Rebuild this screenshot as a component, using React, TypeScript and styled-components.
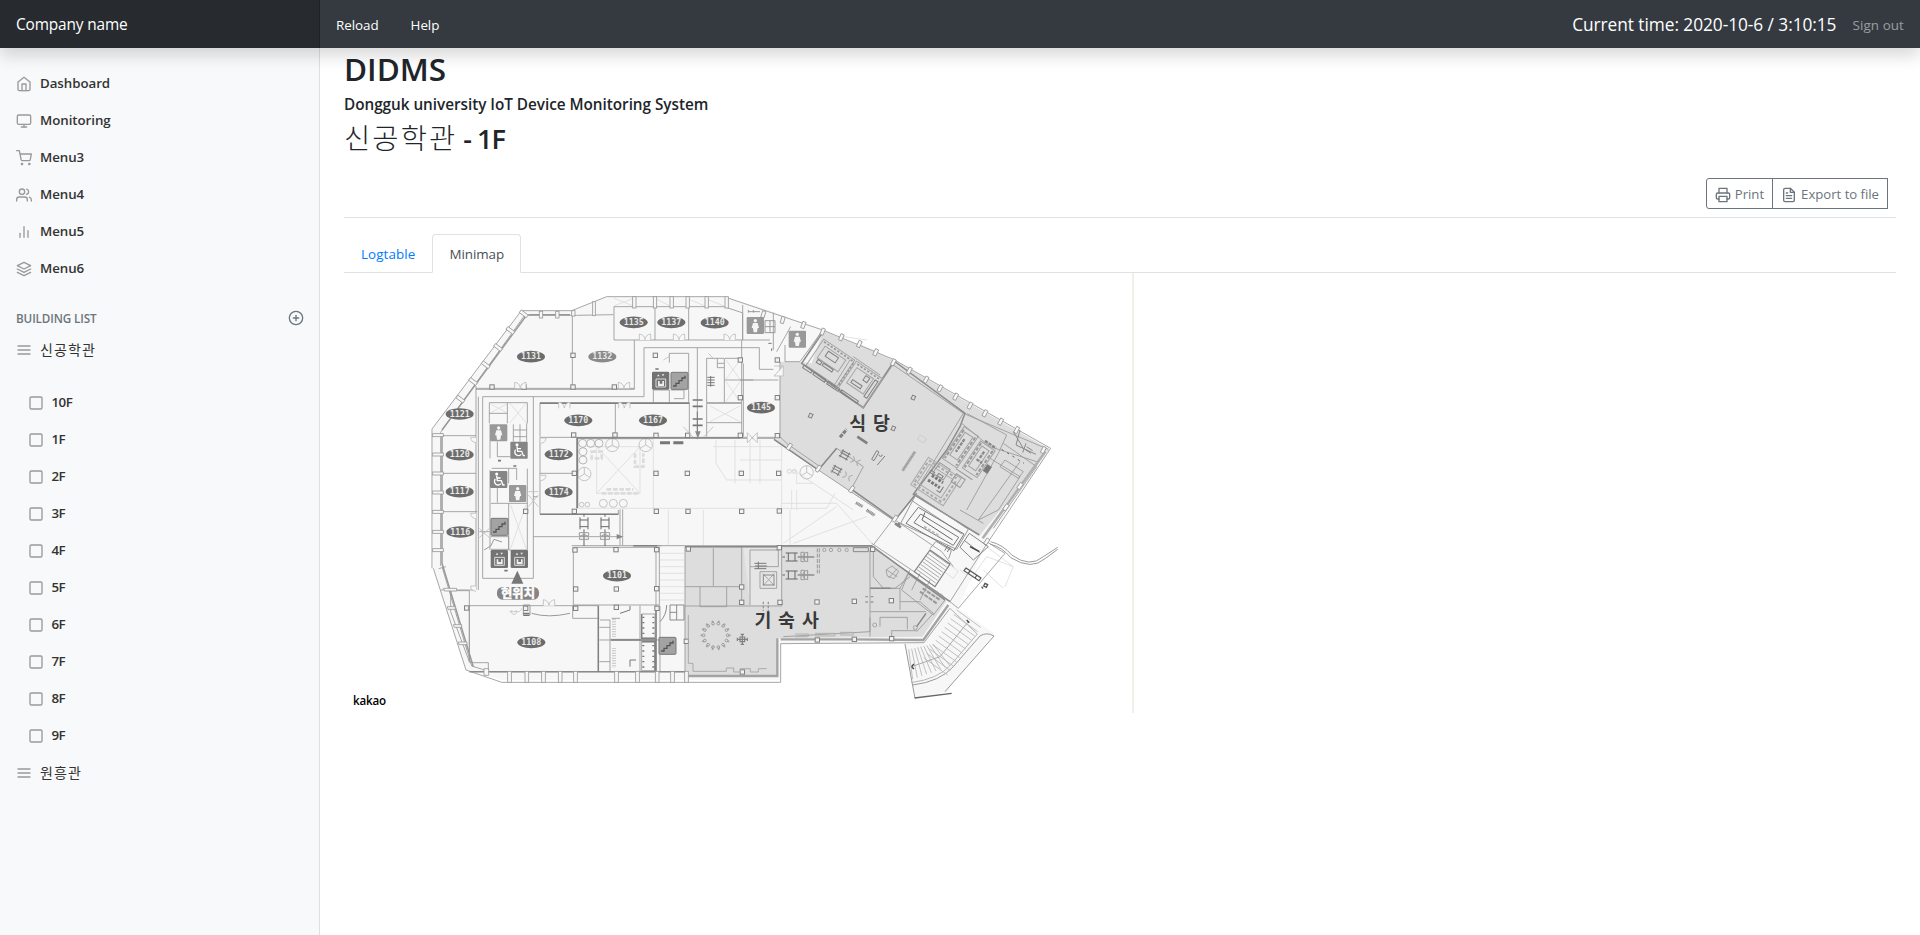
import React from "react";
import styled, { createGlobalStyle } from "styled-components";
import {
  FiHome, FiMonitor, FiShoppingCart, FiUsers, FiBarChart2, FiLayers,
  FiPlusCircle, FiMenu, FiSquare, FiPrinter, FiFileText,
} from "react-icons/fi";

const GlobalStyle = createGlobalStyle`
  *, *::before, *::after { box-sizing: border-box; }
  body {
    margin: 0;
    background: #fff;
    color: #212529;
    font-family: "Open Sans", "Noto Sans CJK KR", sans-serif;
    font-size: 13.4px;
    line-height: 21px;
    overflow: hidden;
  }
  ul { list-style: none; margin: 0; padding: 0; }
  h2, h3, h6, p { margin: 0; font-weight: 600; }
`;

const Page = styled.div`
  display: flex;
  flex-direction: column;
  height: 935px;
`;

const Header = styled.header`
  position: relative;
  z-index: 2;
  display: flex;
  align-items: center;
  flex: 0 0 48px;
  background: #343a40;
  color: #fff;
  box-shadow: 0 8px 16px rgba(0, 0, 0, 0.15);
`;

const Brand = styled.a`
  width: 320px;
  height: 48px;
  padding: 0 16px;
  font-size: 15.4px;
  letter-spacing: -0.14px;
  line-height: 50px;
  background: rgba(0, 0, 0, 0.25);
  box-shadow: inset -1px 0 0 rgba(0, 0, 0, 0.25);
`;

const HeaderLink = styled.a<{ $muted?: boolean }>`
  padding: 2px 16px 0;
  letter-spacing: ${(p) => (p.$muted ? "0.1px" : "-0.05px")};
  color: ${(p) => (p.$muted ? "rgba(255,255,255,.5)" : "#fff")};
`;

const Clock = styled.span`
  margin-left: auto;
  padding-top: 1px;
  font-size: 17.3px;
  letter-spacing: -0.05px;
`;

const Body = styled.div`
  display: flex;
  flex: 1;
`;

const Sidebar = styled.nav`
  flex: 0 0 320px;
  padding-top: 17px;
  background: #f8f9fa;
  box-shadow: inset -1px 0 0 rgba(0, 0, 0, 0.1);
  color: #333;
`;

const NavItem = styled.li<{ $nested?: boolean; $ko?: boolean }>`
  display: flex;
  align-items: center;
  gap: ${(p) => (p.$nested ? 7.5 : 8)}px;
  height: 37px;
  padding-left: ${(p) => (p.$nested ? 28 : 16)}px;
  font-weight: ${(p) => (p.$ko ? 400 : 600)};
  letter-spacing: ${(p) => (p.$ko ? "1.1px" : p.$nested ? "-0.5px" : "-0.05px")};
  font-size: ${(p) => (p.$ko ? "14px" : "13.3px")};

  svg {
    position: relative;
    top: 0.5px;
    width: 16px;
    height: 16px;
    color: #999;
  }
`;

const SectionHead = styled.h6`
  display: flex;
  justify-content: space-between;
  align-items: center;
  margin: 24px 16px 6px;
  height: 14px;
  font-size: 11.7px;
  letter-spacing: -0.12px;
  text-transform: uppercase;
  color: #6c757d;

  svg { width: 16px; height: 16px; }
`;

const FloorList = styled.ul`
  padding-top: 16px;
`;

const Main = styled.main`
  flex: 1;
  padding: 0 24px;
`;

const TitleBlock = styled.div`
  height: 170px;
  border-bottom: 1px solid #dee2e6;
  display: flex;
  flex-direction: column;
`;

const Title = styled.h2`
  font-size: 31.5px;
  line-height: 38px;
  letter-spacing: 0;
  padding-top: 2px;
  margin-bottom: 7px;
`;

const Subtitle = styled.h6`
  font-size: 15.3px;
  line-height: 19px;
  letter-spacing: -0.03px;
  margin-bottom: 7px;
`;

const Place = styled.h3`
  font-size: 27px;
  line-height: 34px;
  letter-spacing: -1px;
`;

const PlaceKo = styled.span`
  font-size: 28.5px;
  font-weight: 300;
  letter-spacing: 2.1px;
`;

const Actions = styled.div`
  display: flex;
  justify-content: flex-end;
  margin: 22px 8px 0 0;
`;

const ActionButton = styled.button<{ $first?: boolean }>`
  display: flex;
  align-items: center;
  gap: 4px;
  height: 31px;
  padding: 0 8px;
  margin-left: ${(p) => (p.$first ? 0 : -1)}px;
  border: 1px solid #6c757d;
  border-radius: ${(p) => (p.$first ? "3px 0 0 3px" : "0")};
  background: transparent;
  color: #6c757d;
  font: 400 13.2px "Open Sans", sans-serif;
  letter-spacing: -0.03px;

  svg { width: 16px; height: 16px; position: relative; top: 1px; }
`;

const Tabs = styled.div`
  display: flex;
  height: 39px;
  margin-top: 16px;
  border-bottom: 1px solid #dee2e6;
`;

const Tab = styled.a<{ $active?: boolean }>`
  height: 39px;
  padding: 8px 16px;
  border: 1px solid ${(p) => (p.$active ? "#dee2e6" : "transparent")};
  border-bottom-color: ${(p) => (p.$active ? "#fff" : "transparent")};
  border-radius: 4px 4px 0 0;
  background: ${(p) => (p.$active ? "#fff" : "transparent")};
  color: ${(p) => (p.$active ? "#495057" : "#007bff")};
  letter-spacing: ${(p) => (p.$active ? "-0.05px" : "0.1px")};
  line-height: 22px;
`;

const MapPane = styled.section`
  position: relative;
  width: 790px;
  height: 440px;
  border-right: 2px solid #f3efe9;

  svg { display: block; width: 788px; height: 440px; }
`;

const Attribution = styled.span`
  position: absolute;
  left: 9px;
  bottom: 2px;
  color: #000;
  font-size: 11.6px;
  font-weight: 600;
  letter-spacing: -0.2px;
`;

/* ---- Floor plan: units are thirds of a pixel, origin at the plan's left top ---- */

const LIGHT = "#f7f7f7";
const GREY = "#dddddd";

const outline =
  "M36 447 L304 92 H455 L560 50 H912 L1030 85 L1208 150 L1420 238 L1892 505 L1700 785 " +
  "L1615 985 L1700 1070 L1695 1080 L1580 1235 L1485 1255 L1455 1092 H1082 V1200 H245 L138 1170 L40 865 Z";

const dining =
  "M1080 245 H1135 L1175 250 L1210 152 L1420 240 L1888 508 L1678 768 L1485 643 L1420 722 L1195 570 L1065 478 H1080 Z";

const dorm = "M795 800 H1360 L1580 962 L1508 1070 L1070 1075 V1190 H795 Z";

const rooms: [number, number, string, string?][] = [
  [333, 230, "1131"], [547, 230, "1132", "#8a8a8a"], [641, 127, "1135"], [754, 127, "1137"],
  [884, 128, "1140"], [1023, 383, "1145"], [119, 402, "1121"], [119, 524, "1120"],
  [119, 635, "1117"], [121, 756, "1116"], [475, 421, "1170"], [699, 421, "1167"],
  [416, 523, "1172"], [416, 636, "1174"], [591, 887, "1101"], [334, 1087, "1108"],
];

const thinWalls = [
  "M36 865 V447 L304 92 H455 L560 50 H912 L1208 150 L1420 238 L1892 505 L1703 788 L1590 965",
  "M62 858 V457 L314 106 H455 L470 106 L580 104",
  "M582 80 H912 L966 98",
  "M40 865 L138 1170 L245 1207 H1082 V1091 L1512 1088 L1590 985",
  "M66 860 L155 1158 L210 1175 H795",
  "M168 318 V930 H62 M62 467 H168 M62 580 H168 M62 695 H172 M175 350 V930",
  "M92 930 V995 L148 1145 M92 932 H148 V1145 M148 1148 H205 V1172",
  "M457 92 V325 M168 325 H643 M168 328 H643 V180 M582 80 V180 H968 M705 80 V180 M806 80 V180 M968 98 V180",
  "M188 895 V350 H672 V203 H960 M188 895 H340 V350",
  "M832 203 V478 M360 470 V368 H808 V472 M586 370 V470 M360 472 H1065",
  "M360 472 V703 H595 M470 472 V685 M360 580 H470 M595 690 V703",
  "M748 220 H806 V368 M748 220 V248 M700 330 V368 M748 330 V368 M700 330 H748 M752 330 h40 v26 h-30",
  "M860 235 V368 H965 M860 235 H913 V368 M915 235 H965 V368 M915 300 H1000 M892 235 v28 h20 M892 250 h20",
  "M860 370 V470 M860 370 H965 V470 M860 428 H965 M965 180 V250",
  "M208 368 H322 V430 M208 368 V430 M262 368 V430 M208 400 H262",
  "M210 433 V535 M232 485 V530 H270 M320 430 V535 M280 433 V485 M300 433 V485 M280 450 H320 M280 470 H320",
  "M210 570 V810 M266 566 V610 M215 565 H290 V600 M322 566 V810 M213 670 H322 M232 624 V668 M266 670 V810 H322",
  "M213 717 H266 M213 770 H266 V810 M213 808 H266",
  "M340 770 H600 M340 650 h14 M178 755 h30",
  "M600 688 V795 M608 688 V795",
  "M460 802 V975 H718 V802 H460 M455 797 H725 M148 977 H535 V1175 M148 977 V1145",
  "M795 800 V1180 M708 800 V1175 M720 977 V1175",
  "M458 977 V1015 H538 M540 1020 H570 V1175 M538 1042 H570 M538 1080 H570 M538 1145 H570 M575 1015 H600 M572 1078 H660",
  "M660 977 V1175 M572 1080 H720 M665 1002 H705 V1075 H665 Z M665 1085 H705 V1172 H665 Z",
  "M640 797 H1355 M795 800 H1355 L1590 965",
  "M880 805 V918 M795 920 H965 M840 920 V980 H920 V920 M965 800 V975 M795 978 H1085 V800",
  "M990 810 h85 v50 h-85 z M1020 875 h50 v50 h-50 z M990 860 V975",
  "M1350 810 V1055 M1090 1070 L1350 1055 M1350 925 H1440 V990 M1350 995 H1518 M1380 1040 V1012 H1462 V1048 M1350 1012 V1070 M1415 1070 V1052 H1490",
  "M968 75 V180 M968 180 H1050 M1060 98 V210 M1070 215 L1112 140 M1095 195 V245 H1140 L1205 155",
  "M960 203 H1018 V268 H1060 M970 250 V470 M960 300 H1075 M1080 245 V475 M960 475 H1065",
  "M1062 478 L1195 570 L1420 720 M1080 470 L1100 490 L1200 560",
  "M1205 155 L1145 250 L1330 385 L1425 245 M1290 240 L1240 320 M1300 230 L1380 285",
  "M1420 255 L1630 400 L1480 645 M1630 400 L1885 508 M1625 430 L1710 500 L1850 545 M1640 400 L1760 465 L1735 520",
  "M1485 643 L1675 765 M1675 720 L1800 545 M1735 520 L1640 690 M1710 535 L1800 590 L1735 690 L1675 720",
  "M1750 490 L1850 560 L1720 745 M1755 540 l55 35 l-15 20 l-55 -35 z M1620 690 L1690 730",
  "M1195 570 L1250 505 M1250 505 L1330 560 L1295 625",
  "M1360 795 L1425 710 M1425 720 L1485 643 M1425 720 L1565 815 L1600 860 M1355 790 L1490 880",
  "M1590 965 L1615 985 L1755 820 L1700 785",
  "M1360 800 V890 L1390 925 H1425 L1470 890 M1440 925 L1470 870 M1440 965 H1500 L1540 1000 L1490 1055",
  "M1465 880 L1575 960 L1540 1005 L1445 930 Z M1500 880 L1475 930 M1530 900 L1500 960",
];

const faintWalls = [
  "M475 478 H700 V685 H475 Z M505 500 H545 M530 500 V640 H660 V500 H530 L660 640 M660 500 L530 640",
  "M960 540 H1085 M880 500 H1085 M888 480 V550 L920 600 H1085 M945 480 V610 M990 480 V610 M1020 480 V610",
  "M1085 480 V800 M700 685 H1085 M745 690 V795 M850 690 V795 M1110 690 V795 M1250 680 L1090 790 M1340 710 L1120 790",
  "M1085 670 H1250 L1360 795 M1120 570 L1300 690 M1130 580 V610 H1180 M1245 640 L1220 685 H1085 M1115 630 V690 M1130 630 V690",
  "M870 378 L960 425 M870 425 L960 378 M918 240 L960 298 M960 240 L918 298 M918 305 L960 365 M960 305 L918 365",
  "M270 370 L318 428 M318 370 L270 428 M212 372 L260 398 M260 372 L212 398 M272 675 L318 805 M318 675 L272 805",
  "M720 820 H792 M720 840 H792 M720 860 H792 M720 880 H792 M720 900 H792 M720 920 H792 M720 940 H792 M720 960 H792",
  "M582 55 L640 78 M640 55 L582 78 M705 55 L750 78 M855 55 L912 78 M800 55 L855 78",
  "M1700 800 L1780 860 L1755 920 M1650 900 L1700 830 L1780 860 M1620 870 L1640 885 M1590 855 l25 18 l-15 22 l-25 -18 z M1690 870 L1750 925",
  "M1310 190 L1380 220 L1350 250 M1310 240 L1390 280 M1270 170 L1340 180",
];

const columns: [number, number][] = [
  [459, 226], [216, 321], [312, 321], [459, 321], [583, 321], [706, 226], [461, 465], [585, 465],
  [708, 466], [803, 466], [961, 466], [961, 353], [961, 240], [708, 580], [802, 580], [964, 580],
  [1076, 580], [709, 694], [804, 694], [965, 694], [1078, 693], [465, 810], [588, 809], [710, 809],
  [467, 927], [589, 927], [710, 926], [317, 694], [1072, 240], [1072, 353], [1072, 467], [589, 982],
  [805, 807], [1078, 803], [965, 921], [965, 967], [1080, 967], [1191, 966], [1303, 964], [1414, 962],
  [799, 1084], [1192, 1080], [1303, 1078], [1415, 1076], [467, 985], [317, 985], [967, 1176],
  [140, 984], [711, 985], [463, 580], [463, 694], [1358, 808],
];

const slanted: [number, number, number][] = [
  [122, 358, 37], [160, 305, 37], [198, 255, 37], [235, 203, 37], [272, 152, 37], [312, 102, 37],
  [1030, 103, 16], [1088, 120, 16], [1150, 135, 20], [1208, 155, 22], [1264, 172, 24], [1318, 192, 26],
  [1367, 217, 26], [1420, 247, 28], [1468, 272, 28], [1518, 299, 28], [1560, 325, 28], [1607, 350, 28],
  [1650, 377, 28], [1695, 400, 28], [1742, 425, 28], [1790, 450, 28], [1870, 510, 28],
  [1800, 618, 35], [1758, 682, 35], [1700, 785, 35], [1425, 716, 35], [1108, 500, 35], [1195, 566, 35], [1295, 628, 35],
];

const edgeTop = [638, 700, 750, 798, 855, 915];
const edgeLeft = [465, 523, 580, 637, 695, 755, 810];
const edgeBottom = [268, 320, 370, 420, 466, 589, 652, 711, 757, 799];

const doors: [number, number][] = [
  [284, 325], [595, 325], [658, 180], [760, 180], [912, 180], [416, 385], [596, 385], [370, 977],
];

const Person = ({ x, y }: { x: number; y: number }) => (
  <g transform={`translate(${x} ${y})`}>
    <rect width="52" height="51" rx="3" fill="#999" />
    <circle cx="26" cy="11" r="5" fill="#f5f5f5" />
    <path d="M19 18 H33 L37 33 H33 L31 46 H21 L19 33 H15 Z" fill="#f5f5f5" />
  </g>
);

const Wheelchair = ({ x, y }: { x: number; y: number }) => (
  <g transform={`translate(${x} ${y})`}>
    <rect width="52" height="51" rx="3" fill="#858585" />
    <circle cx="20" cy="9" r="4.5" fill="#fff" />
    <path d="M20 14 L22 29 H34 L39 42 H44 M21 21 H32 M16 24 A11 11 0 1 0 33 38" fill="none" stroke="#fff" strokeWidth="4" />
  </g>
);

const Elevator = ({ x, y }: { x: number; y: number }) => (
  <g transform={`translate(${x} ${y})`}>
    <rect width="52" height="54" rx="4" fill="#737373" />
    <path d="M12 22 H41 V46 H12 Z" fill="none" stroke="#ddd" strokeWidth="3" />
    <path d="M18 28 h5 v8 h8 v-8 h5 v15 h-18 z" fill="#eee" />
    <path d="M15 14 l4 -6 l4 6 z M29 8 h8 l-4 6 z" fill="#eee" />
  </g>
);

const Stairs = ({ x, y }: { x: number; y: number }) => (
  <g transform={`translate(${x} ${y})`}>
    <rect width="51" height="51" rx="3" fill="#a3a3a3" stroke="#777" strokeWidth="3" />
    <path d="M6 41 H15 V33 H24 V25 H33 V17 H42 V10" fill="none" stroke="#555" strokeWidth="4" />
  </g>
);

const Turnstile = ({ x, y, r = 0 }: { x: number; y: number; r?: number }) => (
  <g transform={`translate(${x} ${y}) rotate(${r})`} fill="none" stroke="#666" strokeWidth="3">
    <path d="M0 -28 V-20 M0 18 V68 M-12 -18 V18 M12 -18 V18 M-12 -10 H12 M-12 10 H12" />
    <path d="M-14 48 A14 14 0 0 1 14 48 Z M-14 28 H14 V38 H-14 Z" stroke="#999" />
  </g>
);

const StepLines = () => (
  <g stroke="#b5b5b5" strokeWidth="2.5" fill="none">
    {Array.from({ length: 12 }, (_, i) => (
      <path key={i} d={`M${1610 - i * 9} ${990 + i * 13} l72 52`} />
    ))}
    {Array.from({ length: 9 }, (_, i) => (
      <path key={i} d={`M${1538 - i * 9} ${1092 + i * 2} l${52 - i * 5} ${66 + i * 3}`} />
    ))}
  </g>
);

const FloorPlan = () => (
  <svg viewBox="344 273 788 440" role="img" aria-label="Floor plan">
    <g transform="translate(420 280) scale(.33333)">
      <path d={outline} fill={LIGHT} />
      <path d="M1455 1092 L1590 985 L1615 985 L1722 1060 L1575 1235 L1485 1255 Z" fill={LIGHT} />
      <path d={dining} fill={GREY} />
      <path d={dorm} fill={GREY} />
      <path d="M970 800 H1085 V975 H990 Z" fill="#e6e6e6" />

      <g fill="none" stroke="#dcdcdc" strokeWidth="2.5">
        {faintWalls.map((d) => <path key={d} d={d} />)}
        {[488, 512, 537].map((x) => <circle key={x} cx={x} cy="490" r="12" stroke="#aaa" />)}
        {[515, 540].map((y) => <circle key={y} cx="489" cy={y} r="12" stroke="#aaa" />)}
        {[[577, 495], [677, 495], [493, 582], [1160, 577]].map(([x, y]) => (
          <g key={x} stroke="#bbb">
            <circle cx={x} cy={y} r="20" />
            <path d={`M${x} ${y} l0 -20 M${x} ${y} l17 10 M${x} ${y} l-17 10`} />
          </g>
        ))}
        {[550, 580, 610].map((x) => <circle key={x} cx={x} cy="670" r="12" stroke="#bbb" />)}
        {[485, 502].map((x) => <circle key={x} cx={x} cy="674" r="7" stroke="#bbb" />)}
        <path d="M515 515 h30 v20 h-30 z M545 640 h110 M560 628 h80 M645 520 v40 h25 v-40" strokeDasharray="14 5" strokeWidth="8" />
      </g>

      <g fill="none" stroke="#999" strokeWidth="2.6">
        {thinWalls.map((d) => <path key={d} d={d} />)}
      </g>

      <g fill="none" stroke="#808080" strokeWidth="4.4">
        <path d="M66 450 L318 108 M325 104 H450 M66 460 V850 L160 1160" stroke="#999" />
        <path d="M360 370 H808 M470 474 H960 M360 703 H595 M640 797 H712 M472 474 V685" />
        <path d="M795 800 H1080 M1085 797 H1355 L1440 860 L1590 965 M148 1175 H795" stroke="#8a8a8a" />
        <path d="M1082 1078 H1300 L1510 1080 L1585 975 M1072 1075 V1188 H800" stroke="#a3a3a3" strokeWidth="7" />
        <path d="M1210 155 L1145 250 L1330 383 L1422 243 L1635 400 L1620 440 L1580 510 L1480 643 L1678 765" stroke="#8d8d8d" />
        <path d="M1062 478 L1195 570 L1250 505 M1295 628 L1425 720 L1490 640" stroke="#888" />
        <path d="M1688 775 L1876 515" stroke="#b0b0b0" strokeWidth="8" />
        <path d="M665 1002 V1075 H705 M665 1085 H705 V1172 M535 977 V1175 M708 985 V1175 M572 1080 H710" />
        <path d="M1350 925 H1412 M1518 1000 L1490 1040 M1465 880 L1575 960" stroke="#888" />
      </g>

      <g fill={LIGHT} stroke="#999" strokeWidth="2.5">
        {edgeTop.map((x) => <rect key={x} x={x} y="50" width="10" height="34" />)}
        {edgeLeft.map((y) => <rect key={y} x="38" y={y - 4} width="32" height="9" />)}
        {edgeBottom.map((x) => <rect key={x} x={x - 5} y="1174" width="11" height="33" />)}
        {slanted.map(([x, y, r]) => (
          <rect key={`${x}-${y}`} x={r === 37 ? -14 : -5} y={r === 37 ? -5 : -10} width={r === 37 ? 26 : 10} height={r === 37 ? 10 : 20} transform={`translate(${x} ${y}) rotate(${r})`} />
        ))}
        <rect x="455" y="92" width="10" height="16" /><rect x="518" y="65" width="8" height="42" />
        <rect x="358" y="94" width="10" height="20" /><rect x="407" y="94" width="10" height="20" />
        <path d="M56 866 l22 -6 M70 925 h40 v8 h-36 z M82 980 h24 v8 h-22 z M100 1034 h25 v8 h-22 z M115 1086 h26 v8 h-24 z M192 1166 h14 v20 h-14 z" />
      </g>

      <g fill="#f2f2f2" stroke="#808080" strokeWidth="3">
        {columns.map(([x, y]) => <rect key={`${x}-${y}`} x={x - 6.5} y={y - 6.5} width="13" height="13" />)}
      </g>

      <g fill={LIGHT} stroke="#bdbdbd" strokeWidth="2.5">
        {doors.map(([x, y]) => <path key={`${x}-${y}`} d={`M${x} ${y} v-18 q15 2 17 17 q2 -15 17 -17 v18`} />)}
        {[[168, 472], [168, 700], [168, 918], [362, 474], [362, 586]].map(([x, y]) => (
          <path key={`${x}-${y}`} d={`M${x} ${y} h${x > 200 ? 16 : -16} q0 14 ${x > 200 ? -16 : 16} 16`} />
        ))}
        <path d="M325 635 h30 M325 680 l30 -35 M355 680 l-30 -35 M178 745 l30 28 M178 773 l30 -28 M790 440 l28 30 M880 440 l-28 30 M1062 258 h28 v30 h-28 l28 -30 M982 458 l30 30 v-30 l-30 30 z M730 240 l20 -12 M865 220 l18 18" />
      </g>

      <g fill="none" stroke="#777" strokeWidth="4">
        <path d="M818 360 H848 M818 379 H848 M818 417 H848 M818 436 H848" strokeWidth="5" />
        <path d="M720 488 H750 M760 488 H790" strokeWidth="9" />
        <path d="M832 395 V460" strokeWidth="3" />
        <path d="M825 454 h17 l-8 20 z M590 762 l20 8 l-20 8 z" fill="#888" stroke="none" />
        <path d="M706 267 h10 M234 542 h9 M280 558 h9 M253 872 h10" strokeWidth="5" />
        <path d="M862 292 h22 M862 300 h22 M862 308 h22 M862 316 h22 M872 288 v32" strokeWidth="3" />
        <path d="M1003 850 h36 M1005 858 h36 M1003 866 h36 M1015 845 v22" strokeWidth="3" />
        <path d="M1028 880 l36 38 M1064 880 l-36 38" stroke="#aaa" strokeWidth="3" />
        <path d="M1030 885 h32 v30 h-32 z" strokeWidth="2.5" />
        <path d="M310 975 h20 v30 h-20 z M335 1000 Q385 1015 450 1000" stroke="#999" strokeWidth="3" />
        <path d="M310 1000 h18 M310 1006 h18" />
        <path d="M268 995 h30 l10 -12 M276 990 a8 8 0 1 0 12 0" stroke="#ccc" strokeWidth="3" />
        <path d="M670 1010 v60 M700 1010 v60 M670 1095 v70 M700 1095 v70" strokeDasharray="4 12" strokeWidth="6" />
        <path d="M582 1018 v55 M582 1105 v60" stroke="#c4c4c4" strokeDasharray="2 3" strokeWidth="12" />
        <path d="M750 975 h20 v45 h-20 z M770 975 h22 v45 h-22 M750 997 h20 M720 1025 q20 -20 20 -50" strokeWidth="2.5" />
        <path d="M192 810 l20 -12 l10 -20 l24 8" stroke="#999" strokeWidth="3" />
        <path d="M1045 190 h10 M1055 205 v8 M600 1000 l30 -10 v-12 M630 1160 v-20 h18" strokeWidth="3" />
        <path d="M805 1005 v145 h14 v24 h100 v-10 h22 v12 h20 v-10 h30 v10 h24 v-10 h25" stroke="#aaa" strokeWidth="3" />
        <path d="M1125 1070 h40 v-8 h-40 M1185 1068 h60 v-8 h-60 M1260 1065 h40 v-8 h-40" stroke="#aaa" strokeWidth="2.5" />
        <path d="M1192 805 V880 M1198 805 V880" stroke="#999" strokeDasharray="12 4" strokeWidth="3" />
        <path d="M1300 803 H1345 V815 H1300 Z" stroke="#888" strokeWidth="3" />
        <path d="M1336 950 h10 M1352 950 h10 M1336 966 h10 M1352 966 h10 M1030 965 v28 M1045 965 v28" stroke="#999" strokeDasharray="8 4" />
      </g>

      <Turnstile x={492} y={730} />
      <Turnstile x={555} y={730} />
      <Turnstile x={1115} y={831} r={-90} />
      <Turnstile x={1115} y={885} r={-90} />

      {/* round table and plant in the lounge */}
      <g fill="none" stroke="#999" strokeWidth="3">
        {Array.from({ length: 14 }, (_, i) => {
          const a = (i * Math.PI) / 7;
          const cx = 887 + 36 * Math.cos(a);
          const cy = 1066 + 36 * Math.sin(a);
          return <g key={i}><circle cx={cx} cy={cy} r="4" /><circle cx={cx + 6 * Math.cos(a)} cy={cy + 6 * Math.sin(a)} r="2" /></g>;
        })}
        <path d="M967 1063 v30 M952 1078 h30 M960 1071 h14 v14 h-14 z M962 1063 h10 M962 1093 h10 M952 1073 v10 M982 1073 v10" stroke="#808080" strokeWidth="3.5" />
      </g>
      <g fill="none" stroke="#999" strokeWidth="2.5">
        {[1213, 1233, 1258, 1280].map((x) => <circle key={x} cx={x} cy="810" r="5" />)}
        {[1108, 1123].map((x) => <circle key={x} cx={x} cy="574" r="6" stroke="#ccc" />)}
        <path d="M1398 870 l18 -12 l20 16 l-14 22 l-20 -8 z M1400 870 L1432 890 M1432 866 L1406 894" />
        <circle cx="1364" cy="1035" r="6" /><circle cx="1486" cy="1043" r="6" />
      </g>

      {/* kitchen and counters */}
      <g fill="none" stroke="#808080" strokeWidth="3">
        <g transform="translate(1203 172) rotate(34)">
          <path d="M10 0 H122 V95 H10 Z M25 15 h75 v42 h-75 z" stroke="#a5a5a5" />
          <path d="M42 22 h36 v18 h-36 z M30 60 h14 v10 h-14 z M50 60 h35 v8 h-35 z M5 97 h30 v9 h-30 z M42 97 h42 v9 h-42 z M92 97 h42 v9 h-42 z" />
          <path d="M128 0 H222 V105 H128 Z M140 15 h60 v55 h-60 z" stroke="#a5a5a5" />
          <path d="M176 20 h14 v16 h-14 z M150 52 h34 v10 h-34 z M206 15 h10 v60 h-10 z M140 96 h60 v8 h-60 z" />
          <path d="M15 6 H118 M135 6 H218 M124 10 V90" strokeDasharray="7 5" strokeWidth="5" stroke="#999" />
        </g>
        <g transform="translate(1545 535) rotate(33)">
          <path d="M-18 8 H98 V106 H-18 Z M-5 24 H80 V90 H-5 Z" stroke="#aaa" />
          <path d="M-12 15 H92 M-12 99 H92 M-12 24 V96 M90 24 V96" strokeDasharray="9 6" strokeWidth="6" stroke="#aaa" />
          <path d="M20 48 h40 M18 66 h42" strokeDasharray="8 4" strokeWidth="9" stroke="#777" />
          <path d="M10 36 h12 v8 h-12 z M34 32 h16 v8 h-16 z M68 58 v20 h-12" />
        </g>
        <g transform="translate(1632 440) rotate(34)">
          <path d="M0 0 H52 V115 H0 Z M65 8 H118 V105 H65 Z M12 12 h28 v82 h-28 z M77 18 h26 v72 h-26 z" stroke="#a2a2a2" />
          <path d="M5 8 V110 M46 8 V110 M70 12 V100 M112 12 V100" strokeDasharray="11 5" strokeWidth="6" stroke="#999" />
          <path d="M76 0 h40 M86 60 h20 M22 30 v46 M92 28 v25" strokeWidth="7" stroke="#888" strokeDasharray="10 3" />
          <path d="M0 130 h38 v38 h-38 z M50 118 h60 M60 130 h32 v28 h-32 z" stroke="#999" />
          <path d="M122 55 h14 v22 h-14 z" fill="#777" />
        </g>
        <path d="M1780 455 l30 50 M1800 450 l-12 45 l60 28 M1820 500 l18 12 M1815 508 l18 12 M1818 490 l-10 28" stroke="#888" />
        <path d="M1745 508 L1812 550" stroke="#666" strokeDasharray="7 12" />
        {[[1172, 407], [1480, 353], [1420, 445]].map(([x, y]) => (
          <rect key={x} x={x - 5} y={y - 6} width="10" height="12" transform={`rotate(25 ${x} ${y})`} />
        ))}
        <path d="M1260 472 L1280 448" strokeWidth="9" strokeDasharray="12 3" />
        <path d="M1312 470 L1342 490" strokeWidth="8" />
        <path d="M1355 538 L1370 512 L1377 516 L1362 542 Z M1372 555 L1395 528 M1382 524 m-5 0 a5 5 0 1 0 10 0" />
        <path d="M1448 572 L1485 515" stroke="#b5b5b5" strokeWidth="9" /><path d="M1448 572 L1485 515" stroke="#8a8a8a" strokeWidth="5" strokeDasharray="2 3" />
        <path d="M1502 465 l18 12 l-10 12 l-18 -12 z" stroke="#ccc" />
        <g transform="translate(1265 510) rotate(28)">
          <path d="M0 0 h30 M0 8 h30 M0 18 h30 M5 -4 v26 M25 -4 v26 M0 52 h30 M0 60 h30 M0 70 h30 M5 48 v26 M25 48 v26" />
          <path d="M40 0 q15 8 0 20 M65 0 q-15 8 0 20 M40 52 q15 8 0 20 M65 52 q-15 8 0 20" stroke="#aaa" />
        </g>
        <path d="M1308 668 L1328 680 M1340 690 L1364 706" strokeWidth="9" strokeDasharray="3 1.5" />
        <path d="M1425 730 l18 12 M1430 738 l10 -8" strokeWidth="8" stroke="#888" />
      </g>

      {/* entrance hall */}
      <g fill="none" stroke="#777" strokeWidth="3">
        <path d="M1488 643 L1645 748 L1610 808 L1442 730 Z M1476 662 L1626 762" stroke="#999" />
        <path d="M1495 682 L1632 762 L1602 812 L1458 730 Z" />
        <path d="M1502 702 L1616 772 L1600 796 L1482 728 Z" />
        <path d="M1515 697 L1506 720 L1598 780" stroke="#666" />
        <path d="M1512 740 L1560 770" stroke="#bbb" strokeDasharray="9 5" strokeWidth="7" />
        {Array.from({ length: 8 }, (_, i) => (
          <path key={i} d={`M${1491 + i * 5.5} ${869 - i * 8} l56 40`} stroke="#999" strokeWidth="2.5" />
        ))}
        <path d="M1530 810 L1590 852 L1545 920 L1483 875 Z" stroke="#808080" strokeWidth="3.5" />
        <path d="M1530 806 L1548 784 L1594 812 L1586 836" stroke="#999" />
        <path d="M1638 864 l45 30 l-6 8 l-45 -30 z M1650 872 l-5 9 M1670 886 l-5 9" strokeWidth="3.5" stroke="#555" />
        <path d="M1695 910 l8 4 l-4 8 l-8 -4 z M1685 920 l4 6" strokeWidth="4" stroke="#555" />
        <path d="M1648 760 L1705 800 L1660 840 L1620 802 Z M1634 782 L1680 818 M1652 800 l26 14" stroke="#888" />
        <path d="M1650 800 l28 15" stroke="#444" strokeWidth="4" />
        <path d="M1508 925 L1560 960 M1518 915 L1570 950 M1500 935 L1550 970" strokeWidth="6" stroke="#999" strokeDasharray="13 3" />
        <path d="M1574 812 l10 -16 M1582 816 l8 -14" strokeWidth="3" />
      </g>

      {/* outside ramp and curved steps */}
      <g fill="none" stroke="#999" strokeWidth="3">
        <path d="M1712 785 Q1750 795 1775 825 Q1830 865 1870 830 L1913 802" />
        <path d="M1710 792 Q1748 802 1772 833 Q1835 872 1875 836 L1913 808" />
        <path d="M1455 1092 L1485 1255 M1478 1215 Q1560 1205 1600 1160 L1680 1068 Q1700 1055 1722 1068 L1575 1235" />
        <path d="M1473 1208 Q1555 1197 1592 1155 L1672 1062 L1590 985" stroke="#b5b5b5" />
        <path d="M1484 1254 L1595 1240" stroke="#666" strokeWidth="4" />
        <path d="M1645 1025 L1560 1130 L1475 1160" stroke="#aaa" />
        <path d="M1474 1160 l8 -8 M1474 1160 l8 7 M1640 1020 l8 8" stroke="#444" strokeWidth="4" />
      </g>
      <StepLines />

      <Person x={210} y={433} /><Person x={267} y={615} />
      <Person x={980} y={111} /><Person x={1106} y={152} />
      <Wheelchair x={271} y={485} /><Wheelchair x={210} y={573} />
      <Stairs x={753} y={277} /><Stairs x={213} y={715} /><Stairs x={717} y={1072} />
      <Elevator x={696} y={275} /><Elevator x={212} y={810} /><Elevator x={272} y={810} />
      <path d="M1035 122 h30 v36 h-30 z M1035 140 h30 M1050 122 v36 M985 95 h35 M985 90 v8 M1000 90 v8" fill="none" stroke="#999" strokeWidth="3" />

      {rooms.map(([x, y, n, fill]) => (
        <g key={n}>
          <ellipse cx={x} cy={y} rx="42" ry="17.5" fill={fill ?? "#6c6c6c"} />
          <text x={x} y={y + 8.5} textAnchor="middle" fontSize="25" fontWeight="700" fontFamily="DejaVu Sans Mono, monospace" fill="#e8e8e8">{n}</text>
        </g>
      ))}

      <path d="M292 872 L310 911 H274 Z" fill="#777" />
      <rect x="231" y="921" width="126" height="38" rx="16" fill="#858585" />
      <g fontFamily="Noto Sans CJK KR, sans-serif" fontWeight="700" textAnchor="middle">
        <text x="294" y="953" fontSize="37" fill="#fff" stroke="#fff" strokeWidth="1.5">현위치</text>
        <g fontSize="55" fill="#3a3a3a">
          <text x="1313" y="451">식</text><text x="1384" y="451">당</text>
          <text x="1029" y="1041">기</text><text x="1099" y="1041">숙</text><text x="1171" y="1041">사</text>
        </g>
      </g>
    </g>
  </svg>
);

const menu = [
  { label: "Dashboard", Icon: FiHome },
  { label: "Monitoring", Icon: FiMonitor },
  { label: "Menu3", Icon: FiShoppingCart },
  { label: "Menu4", Icon: FiUsers },
  { label: "Menu5", Icon: FiBarChart2 },
  { label: "Menu6", Icon: FiLayers },
];

const floors = ["10F", "1F", "2F", "3F", "4F", "5F", "6F", "7F", "8F", "9F"];

export default function App() {
  return (
    <Page>
      <GlobalStyle />
      <Header>
        <Brand>Company name</Brand>
        <HeaderLink>Reload</HeaderLink>
        <HeaderLink>Help</HeaderLink>
        <Clock>Current time: 2020-10-6 / 3:10:15</Clock>
        <HeaderLink $muted>Sign out</HeaderLink>
      </Header>
      <Body>
        <Sidebar>
          <ul>
            {menu.map(({ label, Icon }) => (
              <NavItem key={label}><Icon />{label}</NavItem>
            ))}
          </ul>
          <SectionHead>Building list<FiPlusCircle /></SectionHead>
          <ul>
            <NavItem $ko><FiMenu />신공학관</NavItem>
            <li>
              <FloorList>
                {floors.map((f) => (
                  <NavItem key={f} $nested><FiSquare />{f}</NavItem>
                ))}
              </FloorList>
            </li>
            <NavItem $ko><FiMenu />원흥관</NavItem>
          </ul>
        </Sidebar>
        <Main>
          <TitleBlock>
            <Title>DIDMS</Title>
            <Subtitle>Dongguk university IoT Device Monitoring System</Subtitle>
            <Place><PlaceKo>신공학관</PlaceKo> - 1F</Place>
            <Actions>
              <ActionButton $first><FiPrinter />Print</ActionButton>
              <ActionButton><FiFileText />Export to file</ActionButton>
            </Actions>
          </TitleBlock>
          <Tabs>
            <Tab>Logtable</Tab>
            <Tab $active>Minimap</Tab>
          </Tabs>
          <MapPane>
            <FloorPlan />
            <Attribution>kakao</Attribution>
          </MapPane>
        </Main>
      </Body>
    </Page>
  );
}
